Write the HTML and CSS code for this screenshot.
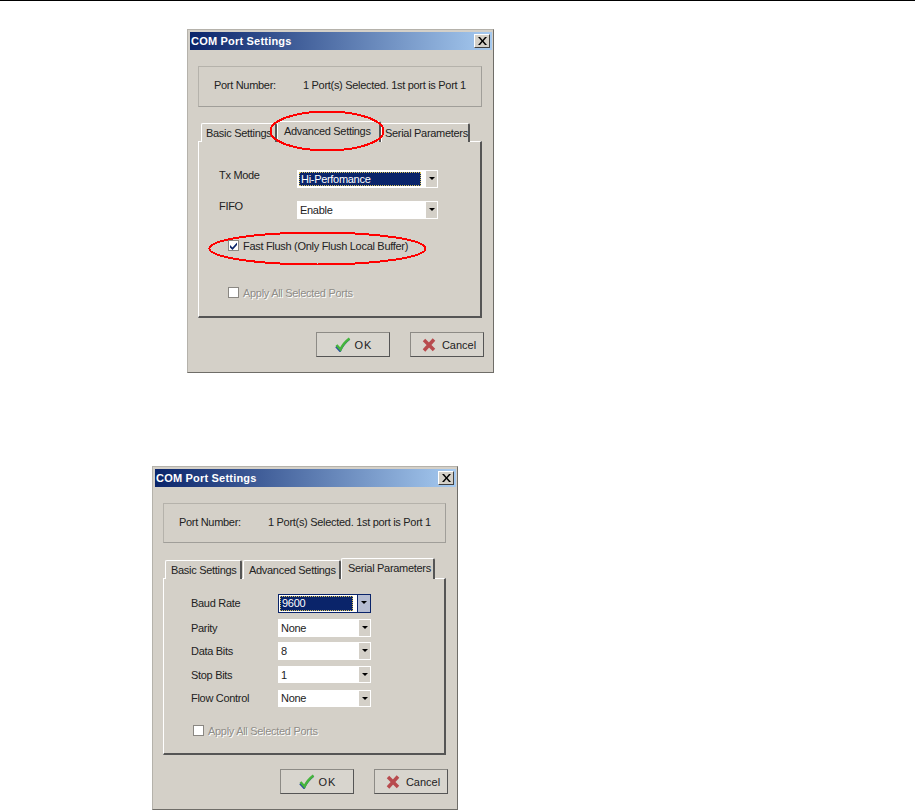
FILE: index.html
```html
<!DOCTYPE html>
<html lang="en">
<head>
    <meta charset="UTF-8">
    <meta name="viewport" content="width=device-width, initial-scale=1.0">
    <title>COM Port Settings</title>
    <link rel="stylesheet" href="styles.css">
</head>
<body>
    <svg class="icon-defs" width="0" height="0">
        <symbol id="icon-close" viewBox="0 0 9 8">
            <path d="M0 0h2l2.500 3 2.500-3h2l-3.500 4 3.500 4h-2l-2.500-3-2.500 3h-2l3.500-4z" fill="#000"/>
        </symbol>
        <symbol id="icon-ok" viewBox="0 0 16 15">
            <path d="M1.500 9.500l4 4.500c2-4.500 5-8.500 9.500-12" fill="none" stroke="#2b4f9f" stroke-width="2"/>
            <path d="M2 8l4 4.500c2-4.500 5-8 9-11" fill="none" stroke="#45b53c" stroke-width="2.500"/>
        </symbol>
        <symbol id="icon-cancel" viewBox="0 0 14 14">
            <path d="M2 2l10 10M12 1.500l-10 11" fill="none" stroke="#b84b4e" stroke-width="3.500"/>
        </symbol>
    </svg>

    <div class="page-rule"></div>

    <div class="dialog dialog-advanced">
        <div class="title-bar">
            <span class="title-text">COM Port Settings</span>
            <span class="close-button"><svg width="9" height="8"><use href="#icon-close"/></svg></span>
        </div>
        <div class="port-box">
            <span class="port-label">Port Number:</span>
            <span>1 Port(s) Selected. 1st port is Port 1</span>
        </div>
        <div class="tabs">
            <div class="tab tab-basic">Basic Settings</div>
            <div class="tab tab-advanced tab-active">Advanced Settings</div>
            <div class="tab tab-serial">Serial Parameters</div>
        </div>
        <div class="tab-panel">
            <div class="mode-grid">
                <span class="mode-label">Tx Mode</span>
                <div class="combo combo-mode combo-selected">
                    <span class="combo-value"><span class="combo-focus">Hi-Perfomance</span></span>
                    <span class="combo-arrow"></span>
                </div>
                <span class="mode-label">FIFO</span>
                <div class="combo combo-mode">
                    <span class="combo-value">Enable</span>
                    <span class="combo-arrow"></span>
                </div>
            </div>
            <label class="check-row check-flush">
                <span class="check-box"><svg width="9" height="9" viewBox="0 0 9 9"><path d="M1 4l2.500 2.500 4.500-5v2.500l-4.500 5-2.500-2.500z" fill="#0a246a"/></svg></span>
                Fast Flush (Only Flush Local Buffer)
            </label>
            <label class="check-row check-disabled check-apply">
                <span class="check-box"></span>
                Apply All Selected Ports
            </label>
        </div>
        <div class="dialog-buttons">
            <button class="btn btn-ok"><svg width="17" height="15"><use href="#icon-ok"/></svg>OK</button>
            <button class="btn btn-cancel"><svg width="14" height="14"><use href="#icon-cancel"/></svg>Cancel</button>
        </div>
        <svg class="mark mark-tab" width="116" height="42"><ellipse cx="58" cy="21" rx="56.500" ry="19.500"/></svg>
        <svg class="mark mark-flush" width="219" height="35"><ellipse cx="109.500" cy="17.500" rx="108" ry="16"/></svg>
    </div>

    <div class="dialog dialog-serial">
        <div class="title-bar">
            <span class="title-text">COM Port Settings</span>
            <span class="close-button"><svg width="9" height="8"><use href="#icon-close"/></svg></span>
        </div>
        <div class="port-box">
            <span class="port-label">Port Number:</span>
            <span>1 Port(s) Selected. 1st port is Port 1</span>
        </div>
        <div class="tabs">
            <div class="tab tab-basic">Basic Settings</div>
            <div class="tab tab-advanced">Advanced Settings</div>
            <div class="tab tab-serial tab-active">Serial Parameters</div>
        </div>
        <div class="tab-panel">
            <div class="param-grid">
                <span class="param-label">Baud Rate</span>
                <div class="combo combo-param combo-baud">
                    <span class="combo-value"><span class="combo-focus">9600</span></span>
                    <span class="combo-arrow"></span>
                </div>
                <span class="param-label">Parity</span>
                <div class="combo combo-param">
                    <span class="combo-value">None</span>
                    <span class="combo-arrow"></span>
                </div>
                <span class="param-label">Data Bits</span>
                <div class="combo combo-param">
                    <span class="combo-value">8</span>
                    <span class="combo-arrow"></span>
                </div>
                <span class="param-label">Stop Bits</span>
                <div class="combo combo-param combo-short">
                    <span class="combo-value">1</span>
                    <span class="combo-arrow"></span>
                </div>
                <span class="param-label param-label-flow">Flow Control</span>
                <div class="combo combo-param combo-short combo-flow">
                    <span class="combo-value">None</span>
                    <span class="combo-arrow"></span>
                </div>
            </div>
            <label class="check-row check-disabled check-apply">
                <span class="check-box"></span>
                Apply All Selected Ports
            </label>
        </div>
        <div class="dialog-buttons">
            <button class="btn btn-ok"><svg width="17" height="15"><use href="#icon-ok"/></svg>OK</button>
            <button class="btn btn-cancel"><svg width="14" height="14"><use href="#icon-cancel"/></svg>Cancel</button>
        </div>
    </div>
</body>
</html>
```

FILE: styles.css
```css
html, body {
    margin: 0;
    padding: 0;
    background-color: #fff;
}
body {
    font-family: "Liberation Sans", Arial, sans-serif;
    font-size: 11px;
    letter-spacing: -0.3px;
    color: #000;
    height: 810px;
    overflow: hidden;
}
.icon-defs {
    position: absolute;
}
.page-rule {
    height: 1px;
    background-color: #000;
}

/* dialogs */
.dialog {
    position: relative;
    box-sizing: border-box;
    height: 344px;
    padding: 2px 1px 0 2px;
    background-color: #d4d0c8;
    border: 1px solid #b5b2ab;
    border-right-color: #6f6d68;
    border-bottom-color: #6f6d68;
}
.dialog-advanced {
    width: 307px;
    margin: 28px 0 0 187px;
}
.dialog-serial {
    width: 306px;
    margin: 93px 0 0 152px;
}

.title-bar {
    display: flex;
    align-items: center;
    justify-content: space-between;
    height: 18px;
    padding: 0 2px 0 1px;
    background: linear-gradient(to right, #0a246a, #a6caf0);
}
.title-text {
    color: #fff;
    font-weight: bold;
    letter-spacing: 0.2px;
}
.close-button {
    display: flex;
    align-items: center;
    justify-content: center;
    box-sizing: border-box;
    width: 16px;
    height: 14px;
    background-color: #d4d0c8;
    border: 1px solid #fff;
    border-right-color: #404040;
    border-bottom-color: #404040;
}

/* port number box */
.port-box {
    display: flex;
    align-items: center;
    box-sizing: border-box;
    height: 41px;
    margin: 16px 10px 0 8px;
    padding: 0 0 3px 15px;
    border: 1px solid #a09e99;
    border-top-color: #b5b2ab;
    border-left-color: #b5b2ab;
    color: #222;
}
.dialog-serial .port-box {
    height: 40px;
    padding-bottom: 2px;
}
.port-label {
    width: 89px;
}

/* tabs */
.tabs {
    display: flex;
    align-items: flex-end;
    position: relative;
    z-index: 1;
    height: 21px;
    margin: 14px 0 -1px 11px;
}
.dialog-serial .tabs {
    margin: 15px 0 -1px 10px;
}
.tab {
    box-sizing: border-box;
    height: 19px;
    padding: 3px 0 0 5px;
    line-height: 13px;
    white-space: nowrap;
    color: #222;
    background-color: #d4d0c8;
    border: 1px solid #fff;
    border-bottom: none;
    border-right: 2px solid #555;
    border-radius: 2px 2px 0 0;
}
.tab-active {
    height: 21px;
    padding: 3px 0 0 6px;
}
.dialog-advanced .tab-basic { width: 76px; padding-left: 4px; }
.dialog-advanced .tab-advanced { width: 104px; }
.dialog-advanced .tab-serial { width: 89px; padding-left: 3px; }
.dialog-serial .tab-basic { width: 77px; }
.dialog-serial .tab-advanced { width: 98px; margin-left: 1px; }
.dialog-serial .tab-serial { width: 94px; }

.tab-panel {
    box-sizing: border-box;
    height: 177px;
    margin: 0 10px 0 8px;
    border: 1px solid #fff;
    border-right: 2px solid #555;
    border-bottom: 2px solid #555;
}

.mode-grid {
    display: grid;
    grid-template-columns: 78px 141px;
    grid-auto-rows: 31px;
    margin: 26px 0 0 20px;
}
.mode-label {
    padding-top: 1px;
    line-height: 13px;
    color: #222;
}
.param-grid {
    display: grid;
    grid-template-columns: 87px 93px;
    grid-template-rows: 25px 23px 24px 24px 17px;
    margin: 15px 0 0 27px;
}
.param-label {
    line-height: 18px;
    color: #222;
}
.param-label-flow {
    line-height: 16px;
}

/* combo boxes */
.combo {
    display: flex;
    box-sizing: border-box;
    background-color: #fff;
    border: 1px solid #fff;
}
.combo-mode {
    height: 18px;
    margin-top: 2px;
}
.combo-param {
    height: 18px;
}
.combo-short {
    height: 17px;
}
.combo-baud {
    height: 19px;
    border-color: #0a246a;
}
.combo-value {
    flex: 1;
    padding: 0 2px;
    line-height: 16px;
    color: #222;
}
.combo-flow .combo-value {
    line-height: 14px;
}
.combo-selected .combo-value,
.combo-baud .combo-value {
    display: flex;
    margin: 1px 5px 1px 1px;
    padding: 0;
    background-color: #0a246a;
    color: #fff;
}
.combo-baud .combo-value {
    margin-right: 4px;
}
.combo-focus {
    flex: 1;
    padding-left: 1px;
    line-height: 12px;
    border: 1px dotted #d9c25a;
}
.combo-arrow {
    position: relative;
    flex: none;
    width: 11px;
    background-color: #d4d0c8;
}
.combo-baud .combo-arrow {
    width: 12px;
    background-color: #b6bdd2;
    border-left: 1px solid #0a246a;
}
.combo-arrow::after {
    content: "";
    position: absolute;
    left: 3px;
    top: 6px;
    border-left: 3px solid transparent;
    border-right: 3px solid transparent;
    border-top: 3px solid #000;
}

/* checkboxes */
.check-row {
    display: flex;
    align-items: center;
    gap: 4px;
    height: 13px;
    margin-left: 29px;
    color: #222;
}
.check-box {
    display: flex;
    align-items: center;
    justify-content: center;
    box-sizing: border-box;
    width: 11px;
    height: 11px;
    background-color: #fff;
    border: 1px solid #8a8782;
}
.check-flush {
    margin-top: 9px;
}
.dialog-advanced .check-apply {
    margin-top: 34px;
}
.dialog-serial .check-apply {
    margin-top: 17px;
}
.check-disabled {
    color: #8f8d88;
    text-shadow: 1px 1px 0 #fff;
}

/* OK and Cancel */
.dialog-buttons {
    display: flex;
    justify-content: flex-end;
    gap: 20px;
    margin: 14px 8px 0 0;
}
.btn {
    display: flex;
    align-items: center;
    justify-content: center;
    box-sizing: border-box;
    width: 74px;
    height: 25px;
    padding: 0;
    font-family: inherit;
    font-size: 11px;
    letter-spacing: 0;
    color: #222;
    background-color: #d8d5ce;
    border: 1px solid #8d8b86;
    border-right-color: #555;
    border-bottom-color: #555;
}
.btn-ok {
    gap: 4px;
    letter-spacing: 1px;
}
.btn-cancel {
    gap: 6px;
    padding-left: 4px;
}

/* red hand-drawn marks over the screenshot */
.mark {
    position: absolute;
    z-index: 2;
    fill: none;
    stroke: #f00;
    stroke-width: 2;
    shape-rendering: crispEdges;
}
.mark-tab {
    left: 81px;
    top: 80px;
}
.mark-flush {
    left: 20px;
    top: 201px;
}
```
